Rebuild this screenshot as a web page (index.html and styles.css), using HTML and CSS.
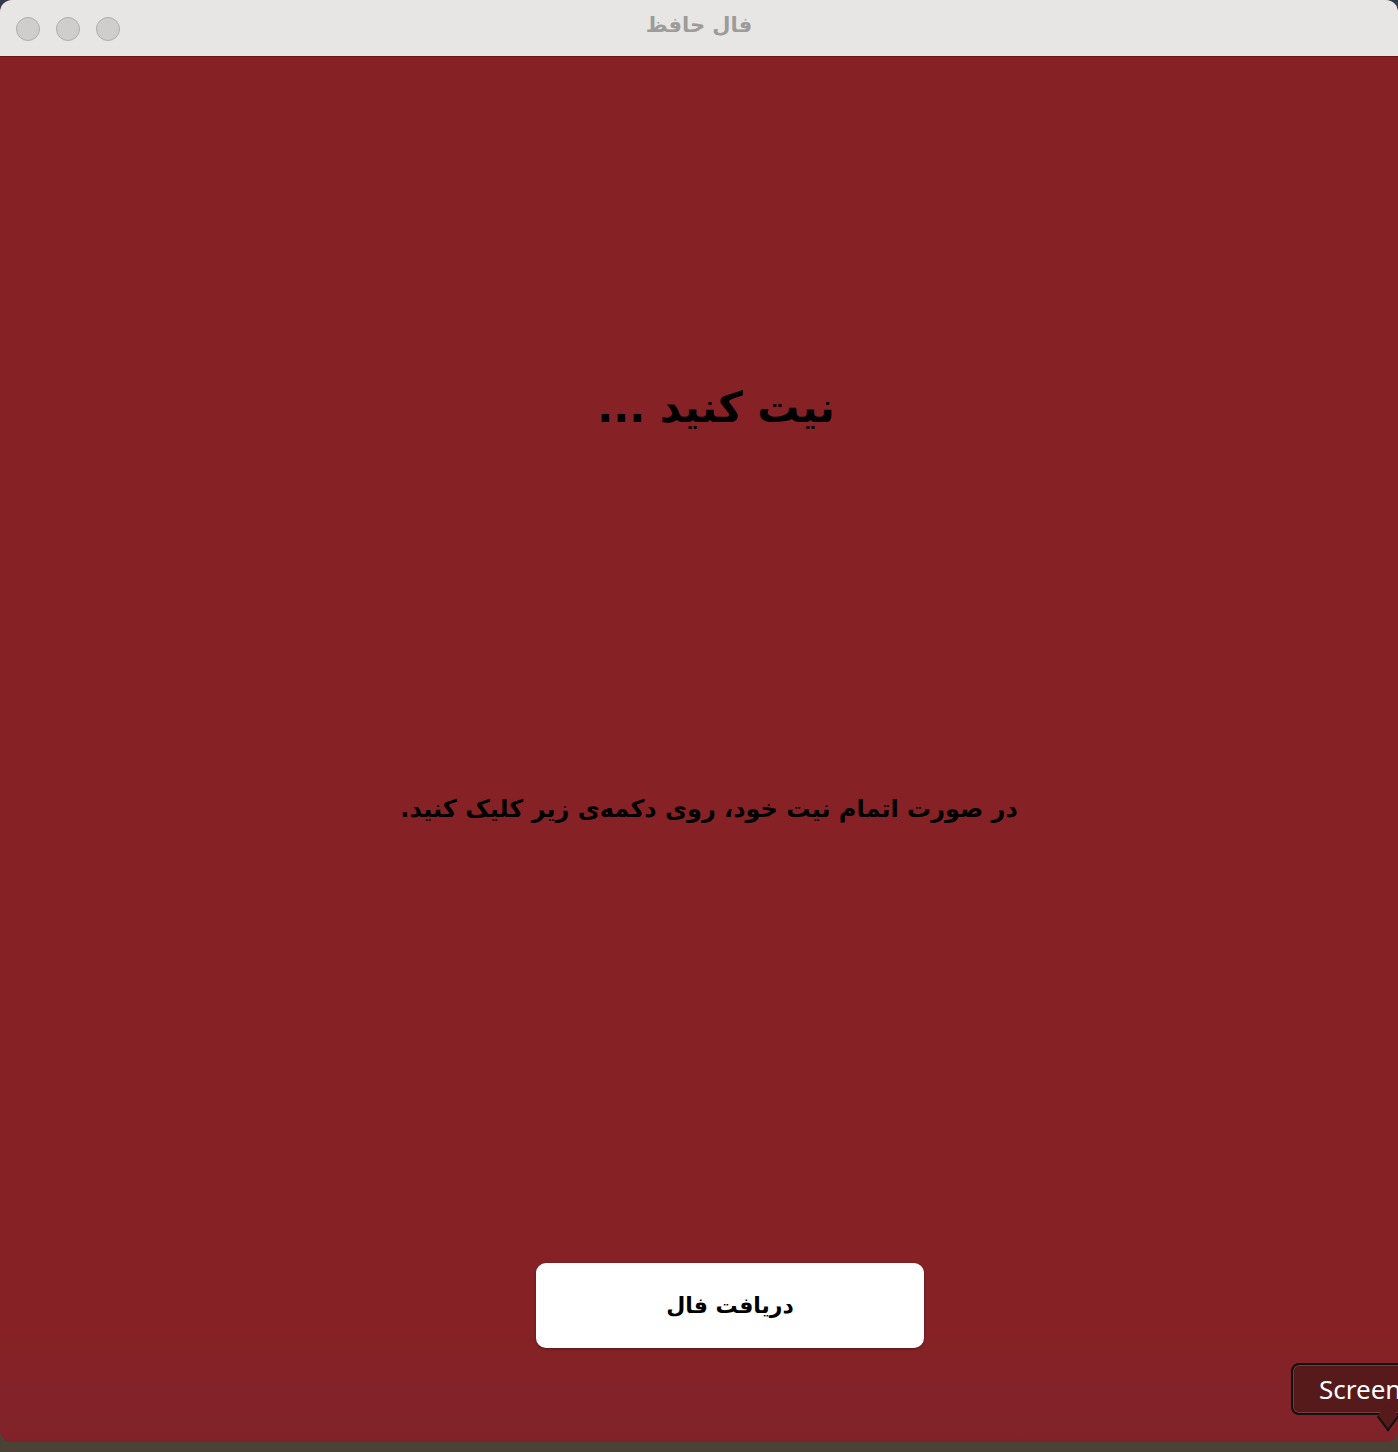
FILE: index.html
```html
<!DOCTYPE html>
<html lang="fa">
<head>
<meta charset="utf-8">
<title>فال حافظ</title>
<link rel="stylesheet" href="styles.css">
</head>
<body>
<div class="desktop">
  <div class="window">
    <div class="titlebar">
      <div class="lights">
        <span class="light"></span>
        <span class="light"></span>
        <span class="light"></span>
      </div>
      <div class="title" dir="rtl">فال حافظ</div>
    </div>
    <main class="content" dir="rtl">
      <h1 class="heading">نیت کنید ...</h1>
      <p class="hint">در صورت اتمام نیت خود، روی دکمه‌ی زیر کلیک کنید.</p>
      <button class="action">دریافت فال</button>
    </main>
  </div>
  <div class="badge">Screen</div>
</div>
</body>
</html>
```
FILE: styles.css
```css
html, body {
  margin: 0;
  padding: 0;
}
body {
  width: 1398px;
  height: 1452px;
  overflow: hidden;
  background: #4a4335;
  font-family: "DejaVu Sans", "Noto Sans", sans-serif;
}
.desktop {
  position: relative;
  width: 1398px;
  height: 1452px;
  background: linear-gradient(180deg, #2f3a4c 0, #2f3a4c 60px, #4d4536 60px, #4a4335 100%);
}
.window {
  width: 1398px;
  height: 1442px;
  border-radius: 12px;
  overflow: hidden;
  display: flex;
  flex-direction: column;
  background: #862226;
}
.titlebar {
  height: 56px;
  flex: none;
  background: #e7e6e4;
  border-bottom: 1px solid #6b1417;
  display: flex;
  align-items: center;
  position: relative;
}
.lights {
  display: flex;
  gap: 16px;
  padding-left: 16px;
  padding-top: 1px;
}
.light {
  width: 22px;
  height: 22px;
  border-radius: 50%;
  background: #cfcecd;
  border: 1px solid #aeadab;
}
.title {
  position: absolute;
  left: 0;
  right: 0;
  top: 12px;
  text-align: center;
  font-size: 21px;
  font-weight: bold;
  color: #9d9c9b;
  line-height: 26px;
}
.content {
  flex: 1;
  display: flex;
  flex-direction: column;
  align-items: center;
  background: linear-gradient(180deg, #862226 0, #862226 92%, #81222a 100%);
}
.heading {
  margin: 323px 0 0 34px;
  font-size: 42px;
  line-height: 56px;
  font-weight: bold;
  color: #000;
}
.hint {
  margin: 358px 0 0 20px;
  font-size: 24px;
  line-height: 30px;
  font-weight: bold;
  color: #000;
}
.action {
  margin: 439px 0 0 62px;
  width: 388px;
  height: 85px;
  border: none;
  border-radius: 10px;
  background: #fff;
  box-shadow: 0 1px 3px rgba(0, 0, 0, 0.35);
  font-family: "DejaVu Sans", "Noto Sans", sans-serif;
  font-size: 22px;
  font-weight: bold;
  color: #000;
}
.badge {
  position: absolute;
  left: 1291px;
  top: 1363px;
  width: 140px;
  height: 52px;
  box-sizing: border-box;
  background: #561a1b;
  border: 2px solid #111;
  border-radius: 8px;
  box-shadow: inset 0 0 0 1px #7a3a3b;
  color: #fff;
  font-family: "Noto Sans", "DejaVu Sans", sans-serif;
  font-size: 26px;
  line-height: 48px;
  padding-left: 26px;
}
.badge::after {
  content: "";
  position: absolute;
  left: 86px;
  bottom: -13px;
  width: 16px;
  height: 16px;
  background: #561a1b;
  border-right: 2px solid #111;
  border-bottom: 2px solid #111;
  transform: rotate(45deg) skew(8deg, 8deg);
}
```
